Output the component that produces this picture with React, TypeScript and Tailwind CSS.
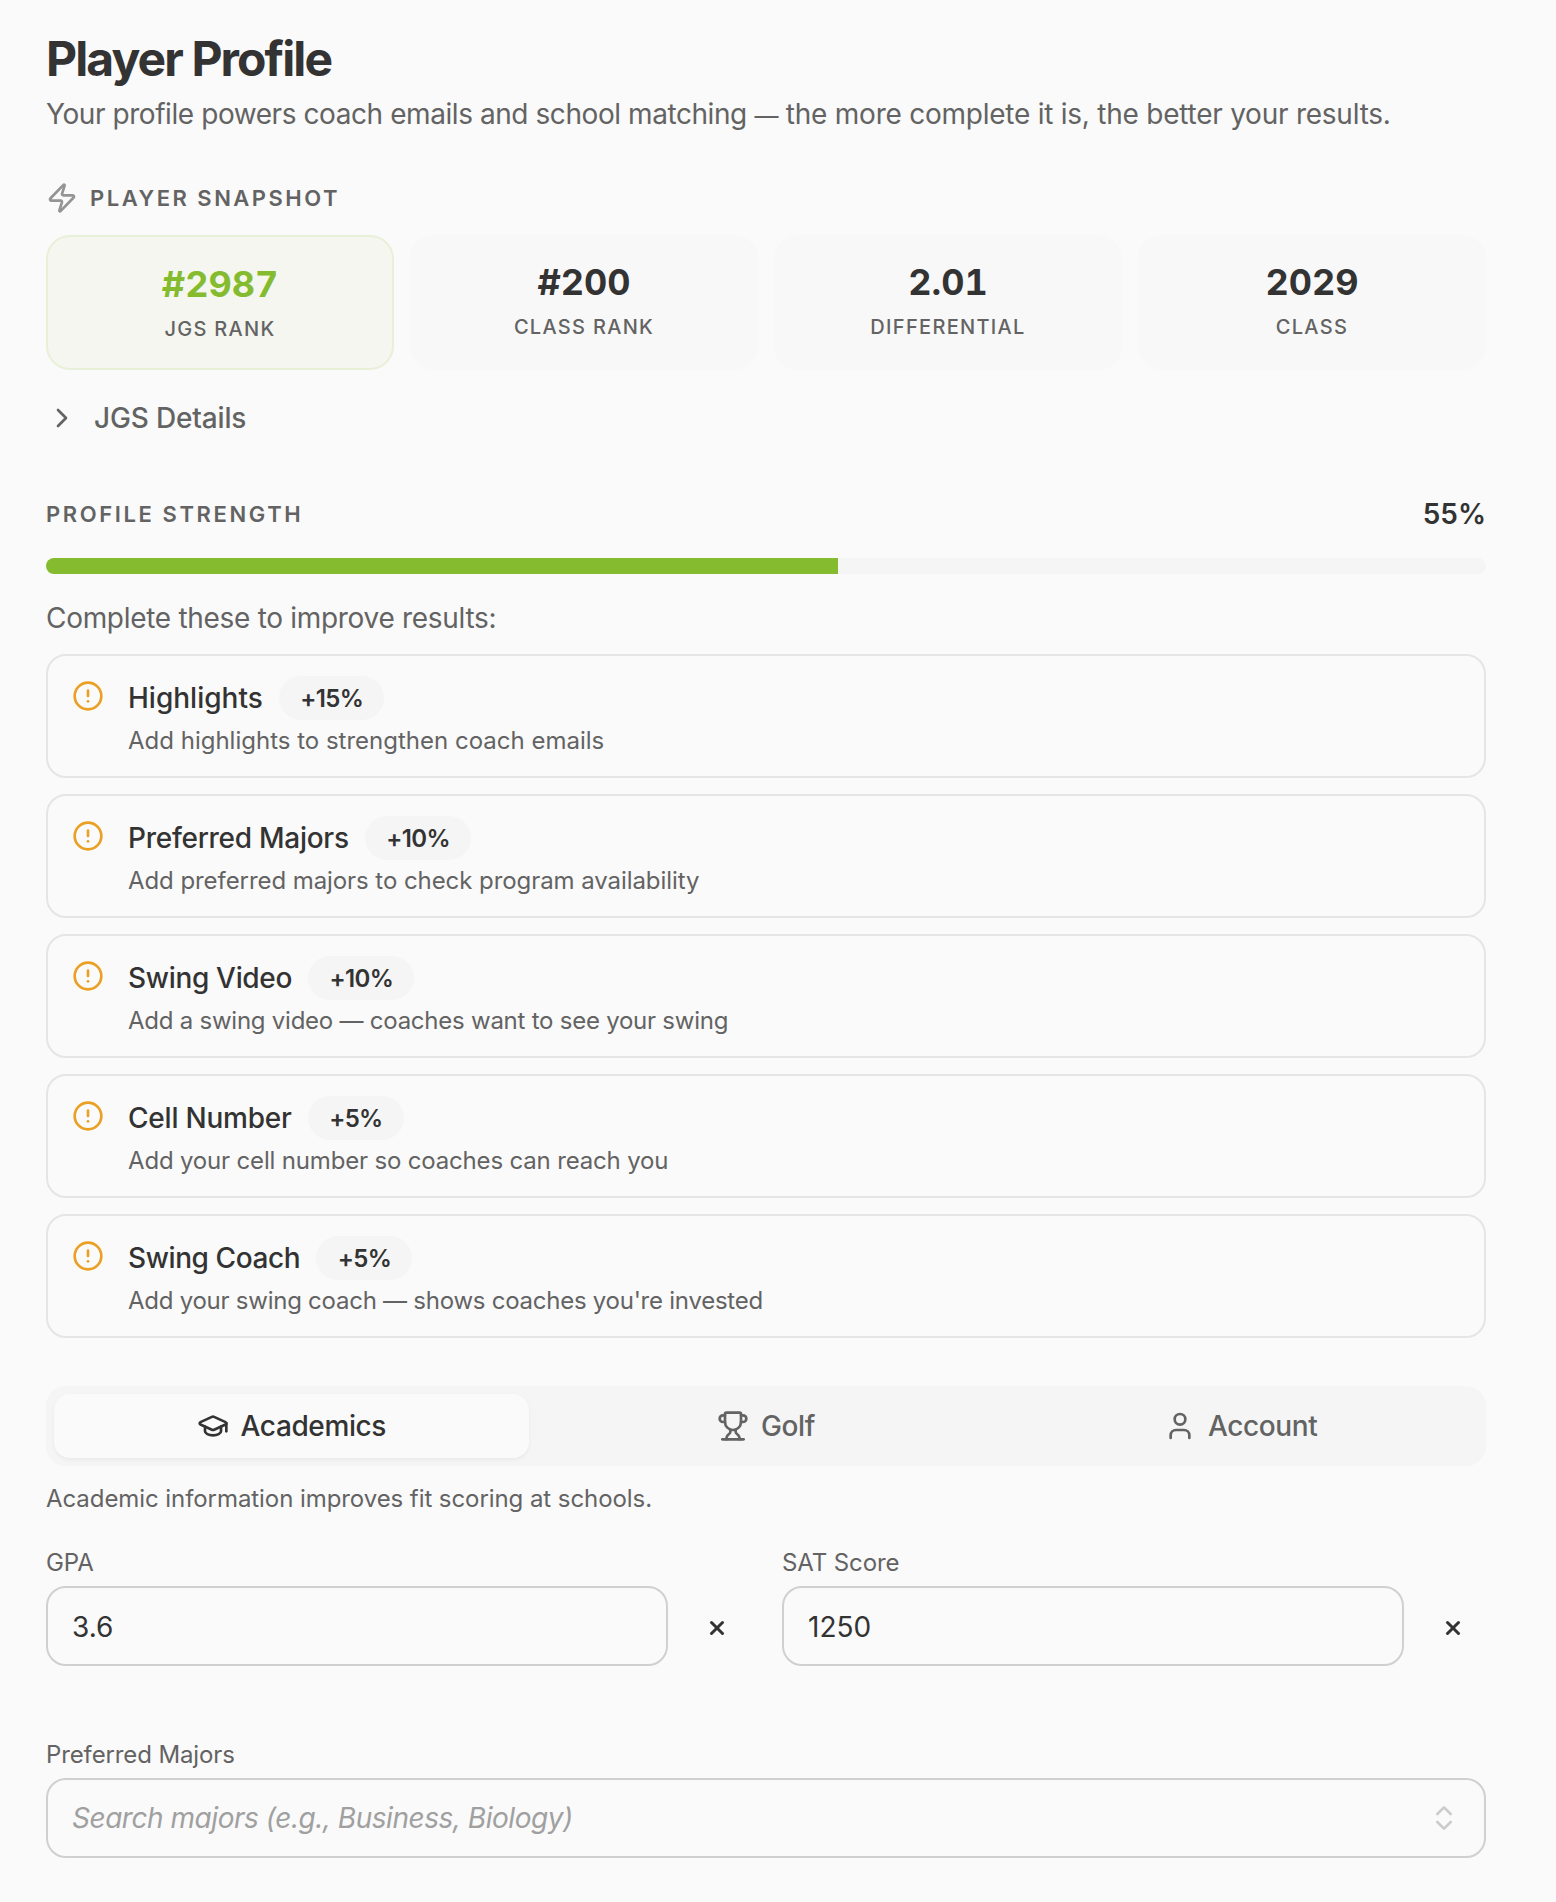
import { useState } from 'react'
import { CircleAlert, ChevronRight, ChevronsUpDown, GraduationCap, Trophy, User, X, Zap } from 'lucide-react'

const STATS = [
  { label: 'JGS Rank', value: '#2987', highlight: true },
  { label: 'Class Rank', value: '#200' },
  { label: 'Differential', value: '2.01' },
  { label: 'Class', value: '2029' },
]

const TODOS = [
  {
    title: 'Highlights',
    titleClass: 'tracking-normal',
    weight: 15,
    hint: 'Add highlights to strengthen coach emails',
    hintClass: 'tracking-normal',
  },
  {
    title: 'Preferred Majors',
    titleClass: 'tracking-[-0.27px]',
    weight: 10,
    hint: 'Add preferred majors to check program availability',
    hintClass: 'tracking-[-0.07px]',
  },
  {
    title: 'Swing Video',
    titleClass: 'tracking-[-0.32px]',
    weight: 10,
    hint: 'Add a swing video — coaches want to see your swing',
    hintClass: 'tracking-[-0.24px]',
  },
  {
    title: 'Cell Number',
    titleClass: 'tracking-[-0.22px]',
    weight: 5,
    hint: 'Add your cell number so coaches can reach you',
    hintClass: 'tracking-[-0.17px]',
  },
  {
    title: 'Swing Coach',
    titleClass: 'tracking-[-0.4px]',
    weight: 5,
    hint: "Add your swing coach — shows coaches you're invested",
    hintClass: 'tracking-[-0.25px]',
  },
]

const TABS = [
  { id: 'academics', label: 'Academics', icon: GraduationCap },
  { id: 'golf', label: 'Golf', icon: Trophy },
  { id: 'account', label: 'Account', icon: User },
]

function ScoreField({ label, initial }: { label: string; initial: string }) {
  const [value, setValue] = useState(initial)

  return (
    <div>
      <label className="block text-2xl leading-[34px] tracking-[-0.1px] text-[#636363]">{label}</label>
      <div className="mt-1.5 flex items-center gap-4">
        <input
          type="text"
          value={value}
          onChange={e => setValue(e.target.value)}
          className="h-20 min-w-0 flex-1 rounded-[20px] border-2 border-[#d0d0d0] bg-transparent px-6 pt-0.5 text-[28px] text-[#333333] focus:outline-none"
        />
        <button
          type="button"
          aria-label={`Clear ${label}`}
          onClick={() => setValue('')}
          className="flex h-20 w-[66px] items-center justify-center pt-1"
        >
          <X size={22} strokeWidth={3.3} />
        </button>
      </div>
    </div>
  )
}

export default function App() {
  const [tab, setTab] = useState('academics')
  const strength = 55

  return (
    <div className="min-h-screen bg-[#fafafa] pl-[46px] pr-[70px] pt-8 pb-11 font-['Inter',sans-serif] text-[#333333]">
      <h1 className="text-5xl leading-[54px] font-bold tracking-[-1.9px]">Player Profile</h1>
      <p className="mt-2 text-[28px] leading-10 tracking-[-0.24px] text-[#636363]">
        <span className="tracking-[-0.43px]">Your profile powers coach emails and school matching</span>{' '}
        <span className="text-2xl leading-none">—</span> the more complete it is, the better your results.
      </p>

      <section className="mt-12">
        <div className="flex items-center gap-3">
          <Zap size={32} strokeWidth={2} className="text-[#949494]" />
          <h2 className="text-[22px] leading-8 font-semibold tracking-[2.5px] text-[#636363] uppercase">
            Player Snapshot
          </h2>
        </div>
        <div className="mt-[21px] grid grid-cols-4 gap-4">
          {STATS.map(s => (
            <div
              key={s.label}
              className={`h-[135px] rounded-3xl pt-[25px] text-center ${
                s.highlight ? 'border-2 border-[#e8f0d8] bg-[#f5f6f0]' : 'bg-[#f8f8f8]'
              }`}
            >
              <p className={`text-4xl leading-[45px] font-bold tabular-nums ${s.highlight ? 'text-[#85bb2f]' : ''}`}>
                {s.value}
              </p>
              <p className="mt-1 text-xl leading-[36px] font-medium tracking-[1.3px] text-[#636363] uppercase">
                {s.label}
              </p>
            </div>
          ))}
        </div>
        <button
          type="button"
          className="mt-7 flex items-center gap-4 text-[28px] leading-10 font-medium tracking-[-0.16px] text-[#636363]"
        >
          <ChevronRight size={32} strokeWidth={2} />
          JGS Details
        </button>
      </section>

      <section className="mt-14">
        <div className="flex items-center justify-between">
          <h2 className="text-[22px] leading-8 font-semibold tracking-[2.6px] text-[#636363] uppercase">
            Profile Strength
          </h2>
          <span className="text-[28px] leading-10 font-semibold">{strength}%</span>
        </div>
        <div className="mt-6 h-4 overflow-hidden rounded-full bg-[#f5f5f5]">
          <div className="h-full bg-[#85bb2f]" style={{ width: `${strength}%` }} />
        </div>
        <p className="mt-6 text-[28px] leading-10 tracking-[-0.3px] text-[#636363]">Complete these to improve results:</p>

        <div className="mt-4 flex flex-col gap-4">
          {TODOS.map(t => (
            <div key={t.title} className="flex h-[124px] items-start gap-6 rounded-[20px] border-2 border-[#e5e5e5] px-6 pt-5">
              <CircleAlert size={32} strokeWidth={2} className="mt-1 shrink-0 text-[#e9a023]" />
              <div>
                <div className="flex items-center gap-4">
                  <span className={`text-[28px] leading-10 font-medium ${t.titleClass}`}>{t.title}</span>
                  <span className="flex h-11 items-center rounded-full bg-[#f5f5f5] pt-0.5 pr-[21px] pl-[21.5px] text-2xl font-semibold tracking-[-0.65px]">
                    +{t.weight}%
                  </span>
                </div>
                <p className={`text-2xl leading-[42px] text-[#636363] ${t.hintClass}`}>{t.hint}</p>
              </div>
            </div>
          ))}
        </div>
      </section>

      <div className="mt-12 grid h-20 grid-cols-3 rounded-[20px] bg-[#f5f5f5] p-2">
        {TABS.map(t => (
          <button
            key={t.id}
            type="button"
            onClick={() => setTab(t.id)}
            className={`flex items-center justify-center gap-3 rounded-2xl text-[28px] font-medium tracking-[-0.38px] ${
              tab === t.id ? 'bg-[#fafafa] text-[#333333] shadow-[0_2px_4px_rgba(0,0,0,0.05)]' : 'text-[#636363]'
            }`}
          >
            <t.icon size={32} strokeWidth={2} />
            {t.label}
          </button>
        ))}
      </div>

      <p className="mt-4 text-2xl leading-[34px] tracking-[-0.07px] text-[#636363]">
        Academic information improves fit scoring at schools.
      </p>

      <div className="mt-[30px] grid grid-cols-2 gap-8">
        <ScoreField label="GPA" initial="3.6" />
        <ScoreField label="SAT Score" initial="1250" />
      </div>

      <div className="mt-[72px]">
        <label className="block text-2xl leading-[34px] tracking-[-0.12px] text-[#636363]">Preferred Majors</label>
        <div className="mt-1.5 flex h-20 items-center rounded-[20px] border-2 border-[#d0d0d0] px-6">
          <input
            type="text"
            placeholder="Search majors (e.g., Business, Biology)"
            className="min-w-0 flex-1 bg-transparent text-[28px] tracking-[-0.46px] placeholder:text-[#a0a0a0] placeholder:italic focus:outline-none"
          />
          <ChevronsUpDown size={32} strokeWidth={2} className="text-[#cccccc]" />
        </div>
      </div>
    </div>
  )
}
